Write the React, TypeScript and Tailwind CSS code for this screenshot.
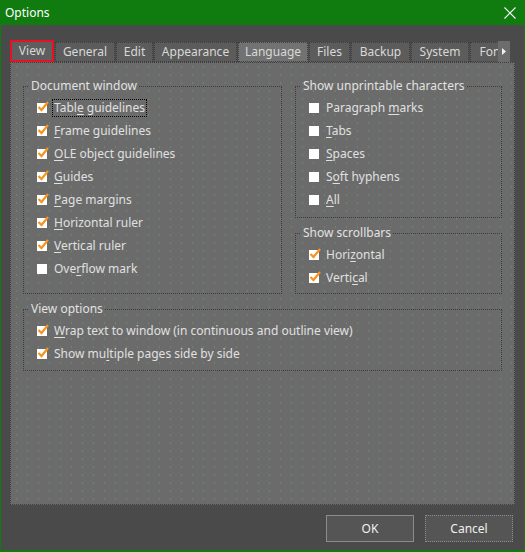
import React from 'react';

// タブ定義
const tabs = [
  { label: 'View', w: 'w-[44px]' },
  { label: 'General', w: 'w-[60px]' },
  { label: 'Edit', w: 'w-[37px]' },
  { label: 'Appearance', w: 'w-[83px]' },
  { label: 'Language', w: 'w-[70px]' },
  { label: 'Files', w: 'w-[41px]' },
  { label: 'Backup', w: 'w-[59px]' },
  { label: 'System', w: 'w-[58px]' },
  { label: 'Fonts', w: 'w-[50px]' },
];

// 下線付き文字 (ニーモニック)
const Mnemonic: React.FC<{ text: string; at: number }> = ({ text, at }) => (
  <>
    {text.slice(0, at)}
    <span className="underline underline-offset-2">{text[at]}</span>
    {text.slice(at + 1)}
  </>
);

const CheckBox: React.FC<{ checked: boolean }> = ({ checked }) => (
  <span className="relative inline-block w-[10px] h-[10px] bg-white shrink-0">
    {checked && (
      <svg className="absolute -top-[3px] left-0" width="13" height="13" viewBox="0 0 13 13">
        <path d="M1.5 7 L4.5 10 L11 2" fill="none" stroke="#f7941d" strokeWidth="2.2" />
      </svg>
    )}
  </span>
);

interface Item {
  text: string;
  at: number;
  checked: boolean;
  focus?: boolean;
}

const Row: React.FC<{ item: Item }> = ({ item }) => (
  <div className="flex items-center h-[23px] pl-[13px]">
    <CheckBox checked={item.checked} />
    <span
      className={
        'ml-[6px] px-[1px] leading-[16px] ' +
        (item.focus ? 'outline outline-1 outline-dotted outline-black' : '')
      }
    >
      <Mnemonic text={item.text} at={item.at} />
    </span>
  </div>
);

const Group: React.FC<{ title: string; items: Item[]; className?: string; pb?: string }> = ({
  title,
  items,
  className = '',
  pb = 'pb-[12px]',
}) => (
  <fieldset className={'border border-dotted border-[#3c3c3c] ' + pb + ' ' + className}>
    <legend className="ml-[5px] px-[2px] leading-[14px] text-[#e2e2e2]">{title}</legend>
    <div className="mt-[3px]">
      {items.map((it) => (
        <Row key={it.text} item={it} />
      ))}
    </div>
  </fieldset>
);

const docItems: Item[] = [
  { text: 'Table guidelines', at: 4, checked: true, focus: true },
  { text: 'Frame guidelines', at: 0, checked: true },
  { text: 'OLE object guidelines', at: 0, checked: true },
  { text: 'Guides', at: 0, checked: true },
  { text: 'Page margins', at: 0, checked: true },
  { text: 'Horizontal ruler', at: 0, checked: true },
  { text: 'Vertical ruler', at: 0, checked: true },
  { text: 'Overflow mark', at: 3, checked: false },
];

const unprintItems: Item[] = [
  { text: 'Paragraph marks', at: 10, checked: false },
  { text: 'Tabs', at: 0, checked: false },
  { text: 'Spaces', at: 0, checked: false },
  { text: 'Soft hyphens', at: 1, checked: false },
  { text: 'All', at: 0, checked: false },
];

const scrollItems: Item[] = [
  { text: 'Horizontal', at: 4, checked: true },
  { text: 'Vertical', at: 5, checked: true },
];

const viewItems: Item[] = [
  { text: 'Wrap text to window (in continuous and outline view)', at: 0, checked: true },
  { text: 'Show multiple pages side by side', at: 7, checked: true },
];

const App: React.FC = () => {
  return (
    <div
      className="w-[525px] h-[552px] flex flex-col bg-[#107c10] text-[12px] text-[#e0e0e0]"
      style={{ fontFamily: '"Noto Sans", "Open Sans", sans-serif' }}
    >
      {/* タイトルバー */}
      <div className="h-[25px] flex items-center justify-between pl-[5px] pr-[9px] text-white">
        <span className="text-[12px]">Options</span>
        <svg width="12" height="12" viewBox="0 0 12 12">
          <path d="M0.5 0.5 L11.5 11.5 M11.5 0.5 L0.5 11.5" stroke="#ffffff" strokeWidth="1.1" />
        </svg>
      </div>

      {/* 本体 */}
      <div className="flex-1 mx-[1px] mb-[2px] bg-[#4a4a4a] flex flex-col px-[9px] pt-[15px]">
        {/* タブ */}
        <div className="flex h-[22px] items-end">
          <div className="flex items-end w-[488px] overflow-hidden">
            {tabs.map((t, i) => (
              <div
                key={t.label}
                className={
                  t.w +
                  ' shrink-0 flex items-center justify-center ' +
                  (i === 0
                    ? 'h-[22px] border-2 border-[#e81123] bg-[#5e5e5e] text-[#d8d8d8]'
                    : 'h-[20px] ml-[1px] border border-dotted border-[#3e3e3e] text-[#d8d8d8] ' +
                      (t.label === 'Language' ? 'bg-[#727272]' : 'bg-[#5c5c5c]'))
                }
              >
                {t.label}
              </div>
            ))}
          </div>
          <div className="w-[12px] h-[21px] bg-[#6c6c6c] flex items-center justify-center">
            <svg width="4" height="7" viewBox="0 0 4 7">
              <path d="M0 0 L4 3.5 L0 7 Z" fill="#f0f0f0" />
            </svg>
          </div>
        </div>

        {/* タブ内容 */}
        <div className="h-[443px] border border-dotted border-[#3e3e3e] bg-[#6b6b6b] bg-[radial-gradient(rgba(100,200,100,0.55)_0.5px,transparent_0.9px)] bg-[length:11px_8px] px-[12px] pt-[16px]">
          <div className="flex gap-[13px] items-stretch">
            <Group title="Document window" items={docItems} className="w-[259px]" />
            <div className="w-[207px] flex flex-col gap-[8px]">
              <Group title="Show unprintable characters" items={unprintItems} pb="pb-[6px]" />
              <Group title="Show scrollbars" items={scrollItems} className="flex-1" pb="pb-[4px]" />
            </div>
          </div>
          <Group title="View options" items={viewItems} className="mt-[8px] w-[479px]" pb="pb-[5px]" />
        </div>

        {/* ボタン */}
        <div className="flex justify-end gap-[11px] mt-[10px] pr-[2px]">
          <button className="w-[88px] h-[27px] bg-[#555555] border border-[#8c8c8c] text-[#f0f0f0]">
            OK
          </button>
          <button className="w-[88px] h-[27px] bg-[#555555] border border-dotted border-[#8c8c8c] text-[#f0f0f0]">
            Cancel
          </button>
        </div>
      </div>
    </div>
  );
};

export default App;
